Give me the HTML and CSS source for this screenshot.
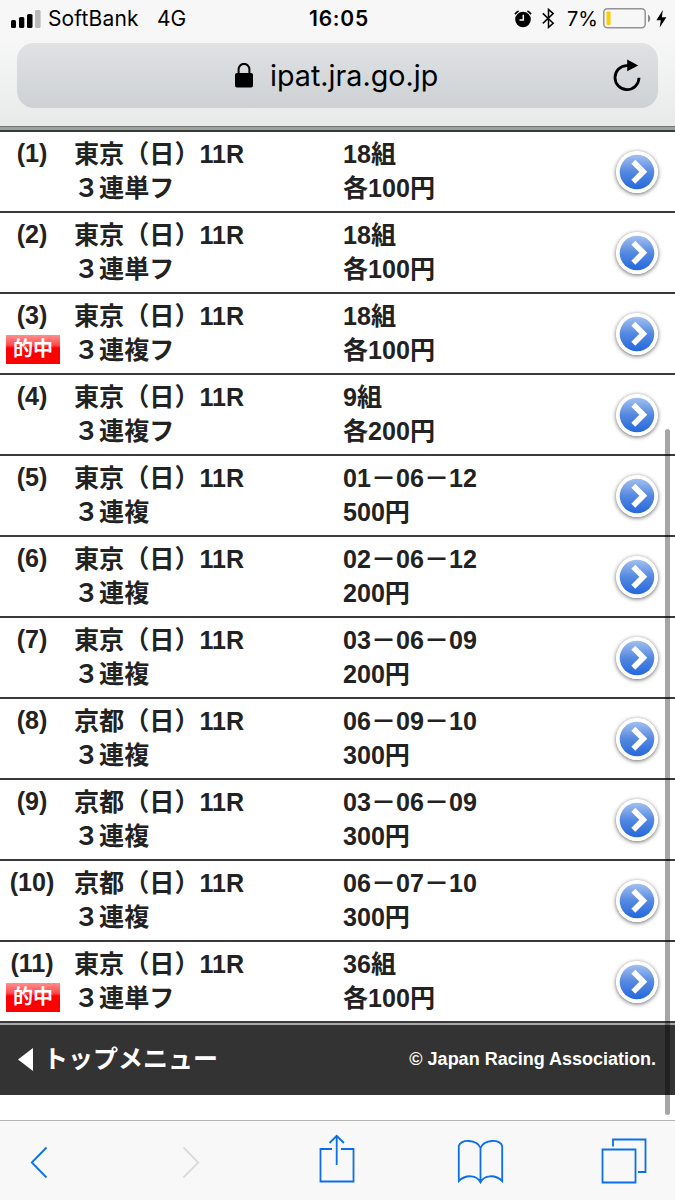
FILE: index.html
```
<!DOCTYPE html>
<html lang="ja">
  <head>
    <meta charset="UTF-8" />
    <meta name="viewport" content="width=device-width, initial-scale=1.0" />
    <title>ipat.jra.go.jp</title>
    <link rel="stylesheet" href="styles.css">
  </head>
  <body>
    <!-- 行の右端に出す矢印ボタン -->
    <svg width="0" height="0" class="defs">
      <defs>
        <linearGradient id="blue" x1="0" y1="0" x2="0" y2="1">
          <stop offset="0" stop-color="#a3c0f0" />
          <stop offset=".5" stop-color="#5488e0" />
          <stop offset="1" stop-color="#2468dc" />
        </linearGradient>
        <symbol id="arrow" viewBox="0 0 42 42">
          <circle cx="21" cy="21" r="21" fill="#fff" />
          <circle cx="21" cy="21" r="17.3" fill="url(#blue)" />
          <path d="M17.3 10.8 27.3 20.8 17.3 30.8" fill="none" stroke="#fff" stroke-width="5.6" />
        </symbol>
      </defs>
    </svg>

    <header>
      <div class="status">
        <div class="carrier">
          <svg width="30" height="18" viewBox="0 0 30 18">
            <rect x="0" y="10" width="5" height="8" rx="1.5" />
            <rect x="8" y="7" width="5.3" height="11" rx="1.5" />
            <rect x="16" y="4" width="5.5" height="14" rx="1.5" />
            <rect x="24" y="0" width="5.6" height="18" rx="1.5" fill="#b9b9b9" />
          </svg>
          <span class="name">SoftBank</span>
          <span>4G</span>
        </div>
        <time>16:05</time>
        <div class="power">
          <svg class="alarm" width="18" height="18" viewBox="0 0 18 18">
            <circle cx="9" cy="9.5" r="7.8" />
            <path d="M1 4.2A9 9 0 0 1 4.6 1M17 4.2A9 9 0 0 0 13.4 1" fill="none" stroke="#000" stroke-width="1.7" />
            <path d="M9.3 4.8V10H5.5" fill="none" stroke="#fff" stroke-width="1.5" />
          </svg>
          <svg class="bluetooth" width="13" height="21" viewBox="0 0 13 21">
            <path d="M.8 5.4 11.2 15.2 6.5 19.4V1.4L11.2 5.6.8 15.4" fill="none" stroke="#000" stroke-width="1.5" />
          </svg>
          <span class="percent">7%</span>
          <svg class="battery" width="48" height="21" viewBox="0 0 48 21">
            <rect x=".8" y=".8" width="41.4" height="19" rx="3.5" fill="none" stroke="#949494" stroke-width="1.5" />
            <rect x="3.5" y="3.5" width="4" height="13.5" rx=".8" fill="#fc0" />
            <path d="M45 6.5C48 8 48 13 45 14.3Z" fill="#8b8b8b" />
          </svg>
          <svg class="bolt" width="11" height="18" viewBox="0 0 11 18">
            <path d="M6.8 0 .4 10.2H4.8L3.7 17.4 10.4 7.2H5.9Z" />
          </svg>
        </div>
      </div>
      <div class="address">
        <svg class="lock" width="18" height="25" viewBox="0 0 18 25">
          <path d="M3.6 11V6.3a5.4 5.4 0 0 1 10.8 0V11" fill="none" stroke="#000" stroke-width="2" />
          <rect x="0" y="10" width="18" height="14.6" rx="2" />
        </svg>
        <span class="url">ipat.jra.go.jp</span>
        <svg class="reload" width="30" height="34" viewBox="0 0 30 34">
          <path d="M15.5 6.6H14a12 12 0 1 0 12 12.2" fill="none" stroke="#000" stroke-width="2.8" />
          <path d="M14.2.5 25.2 6.5 14.2 12.3Z" />
        </svg>
      </div>
    </header>

    <main>
      <ul class="bets">
        <li>
          <div class="num">(1)</div>
          <p class="race">東京（日）11R<br>３連単フ</p>
          <p class="amount">18組<br>各100円</p>
          <svg class="go"><use href="#arrow" /></svg>
        </li>
        <li>
          <div class="num">(2)</div>
          <p class="race">東京（日）11R<br>３連単フ</p>
          <p class="amount">18組<br>各100円</p>
          <svg class="go"><use href="#arrow" /></svg>
        </li>
        <li>
          <div class="num">(3)<span class="hit">的中</span></div>
          <p class="race">東京（日）11R<br>３連複フ</p>
          <p class="amount">18組<br>各100円</p>
          <svg class="go"><use href="#arrow" /></svg>
        </li>
        <li>
          <div class="num">(4)</div>
          <p class="race">東京（日）11R<br>３連複フ</p>
          <p class="amount">9組<br>各200円</p>
          <svg class="go"><use href="#arrow" /></svg>
        </li>
        <li>
          <div class="num">(5)</div>
          <p class="race">東京（日）11R<br>３連複</p>
          <p class="amount">01－06－12<br>500円</p>
          <svg class="go"><use href="#arrow" /></svg>
        </li>
        <li>
          <div class="num">(6)</div>
          <p class="race">東京（日）11R<br>３連複</p>
          <p class="amount">02－06－12<br>200円</p>
          <svg class="go"><use href="#arrow" /></svg>
        </li>
        <li>
          <div class="num">(7)</div>
          <p class="race">東京（日）11R<br>３連複</p>
          <p class="amount">03－06－09<br>200円</p>
          <svg class="go"><use href="#arrow" /></svg>
        </li>
        <li>
          <div class="num">(8)</div>
          <p class="race">京都（日）11R<br>３連複</p>
          <p class="amount">06－09－10<br>300円</p>
          <svg class="go"><use href="#arrow" /></svg>
        </li>
        <li>
          <div class="num">(9)</div>
          <p class="race">京都（日）11R<br>３連複</p>
          <p class="amount">03－06－09<br>300円</p>
          <svg class="go"><use href="#arrow" /></svg>
        </li>
        <li>
          <div class="num">(10)</div>
          <p class="race">京都（日）11R<br>３連複</p>
          <p class="amount">06－07－10<br>300円</p>
          <svg class="go"><use href="#arrow" /></svg>
        </li>
        <li>
          <div class="num">(11)<span class="hit">的中</span></div>
          <p class="race">東京（日）11R<br>３連単フ</p>
          <p class="amount">36組<br>各100円</p>
          <svg class="go"><use href="#arrow" /></svg>
        </li>
      </ul>
      <footer>
        <a class="top">
          <svg width="15" height="23" viewBox="0 0 15 23"><path d="M15 0V23L0 11.5Z" fill="#fff" /></svg>
          <span>トップメニュー</span>
        </a>
        <small>© Japan Racing Association.</small>
      </footer>
      <div class="scrollbar"></div>
    </main>

    <nav>
      <svg width="18" height="33" viewBox="0 0 18 33"><path d="M16.5 1.5 1.8 16.5 16.5 31.5" stroke-width="2.4" /></svg>
      <svg class="off" width="18" height="33" viewBox="0 0 18 33"><path d="M1.5 1.5 16.2 16.5 1.5 31.5" stroke-width="2" /></svg>
      <svg class="share" width="36" height="49" viewBox="0 0 36 49">
        <path d="M13 15H1.5V47.5H34.5V15H22M17.7 31V2M10.5 9 17.7 1.8 24.9 9" />
      </svg>
      <svg class="book" width="47" height="44" viewBox="0 0 47 44">
        <path d="M23.5 43V8C20-1 3-1 1.8 6V41C9 34 20 35 23.5 42.3 27 35 38 34 45.2 41V6C44-1 27-1 23.5 8" />
      </svg>
      <svg class="tabs" width="46" height="46" viewBox="0 0 46 46">
        <path d="M1.5 11.5H34.5V44.5H1.5ZM12 8.5V1.5H44.5V34H37" />
      </svg>
    </nav>
  </body>
</html>
```
FILE: styles.css
```
* {
    margin: 0;
    padding: 0;
    box-sizing: border-box;
}
body {
    width: 675px;
    height: 1200px;
    overflow: hidden;
    display: flex;
    flex-direction: column;
    background-color: #fff;
    color: #222;
    font-family: "Liberation Sans", "Noto Sans CJK JP", sans-serif;
}
svg {
    display: block;
    flex: none;
}
.defs {
    position: absolute;
}

/* ステータスバーとアドレスバー */
header {
    height: 126px;
    background: linear-gradient(#f7f7f7 30%, #e8eaea);
    color: #000;
    font-family: Inter, sans-serif;
}
.status {
    display: grid;
    grid-template-columns: 1fr 62px 1fr;
    align-items: center;
    height: 43px;
    padding: 0 8px 6px 11px;
    font-size: 21px;
}
.carrier, .power {
    display: flex;
    align-items: center;
}
.carrier svg {
    margin-right: 7px;
}
.carrier .name {
    width: 109px;
    letter-spacing: .15px;
}
.status time {
    font-weight: 600;
    letter-spacing: .8px;
    text-align: center;
}
.power {
    justify-content: flex-end;
}
.bluetooth {
    margin-left: 10px;
}
.percent {
    margin: 0 5px 0 12px;
    font-size: 20px;
}
.bolt {
    margin-left: 5px;
}
.address {
    display: flex;
    align-items: center;
    height: 65px;
    margin: 0 17px;
    padding: 0 15px 0 218px;
    border-radius: 17px;
    background: linear-gradient(#e0e2e4, #cdd1d3);
}
.url {
    margin-left: 17px;
    font-size: 28.7px;
    white-space: nowrap;
}
.reload {
    margin-left: auto;
}

/* 投票の一覧 */
main {
    position: relative;
    height: 994px;
    border-top: 1px solid #6f7673;
}
.bets {
    list-style: none;
    border-top: 3px solid #9aa39e;
    border-bottom: 2px solid #a5aaa7;
}
.bets li {
    display: grid;
    grid-template-columns: 64px 268px 272px 42px;
    height: 81px;
    padding-top: 5px;
    border-top: 2px solid #3a3a3a;
    font-size: 25.1px;
    font-weight: bold;
    line-height: 34px;
}
.bets li:last-child {
    height: 83px;
    border-bottom: 2px solid #3a3a3a;
}
.num {
    margin-top: -1px;
    text-align: center;
}
.hit {
    display: block;
    width: 54px;
    height: 29px;
    margin: 3px 0 0 6px;
    background: linear-gradient(#ff8f8f, #ff4a4a 35%, #f00 45%, #f00);
    color: #fff;
    font-size: 20px;
    line-height: 29px;
}
.race {
    padding-left: 10px;
}
.amount {
    padding-left: 11px;
}
.go {
    width: 42px;
    height: 42px;
    margin-top: 14px;
    margin-left: 12px;
    border-radius: 50%;
    box-shadow: 0 1px 4px rgba(0, 0, 0, .6);
}
footer {
    display: flex;
    justify-content: space-between;
    align-items: center;
    height: 70px;
    padding: 0 19px 2px 18px;
    background-color: #333;
    color: #fff;
    font-weight: bold;
}
.top {
    display: flex;
    align-items: center;
    gap: 10px;
    font-size: 25px;
}
.top span {
    margin-top: -4px;
}
footer small {
    font-size: 18px;
}
/* ページに重なるスクロールバー */
.scrollbar {
    position: absolute;
    top: 302px;
    right: 5px;
    width: 5px;
    height: 686px;
    border-radius: 3px;
    background-color: rgba(0, 0, 0, .35);
}

/* 下のツールバー */
nav {
    display: flex;
    align-items: center;
    height: 80px;
    padding: 4px 28px 0 30px;
    border-top: 1px solid #b2b2b2;
    background-color: #f8f8f8;
}
nav path {
    fill: none;
    stroke: #0a6fe8;
    stroke-width: 1.8;
}
nav .off {
    margin-left: 134px;
}
nav .off path {
    stroke: #dadada;
}
.share {
    margin: -9px 0 0 119px;
}
.book {
    margin: -1px 0 0 102px;
}
.tabs {
    margin: -3px 0 0 97px;
}
```
